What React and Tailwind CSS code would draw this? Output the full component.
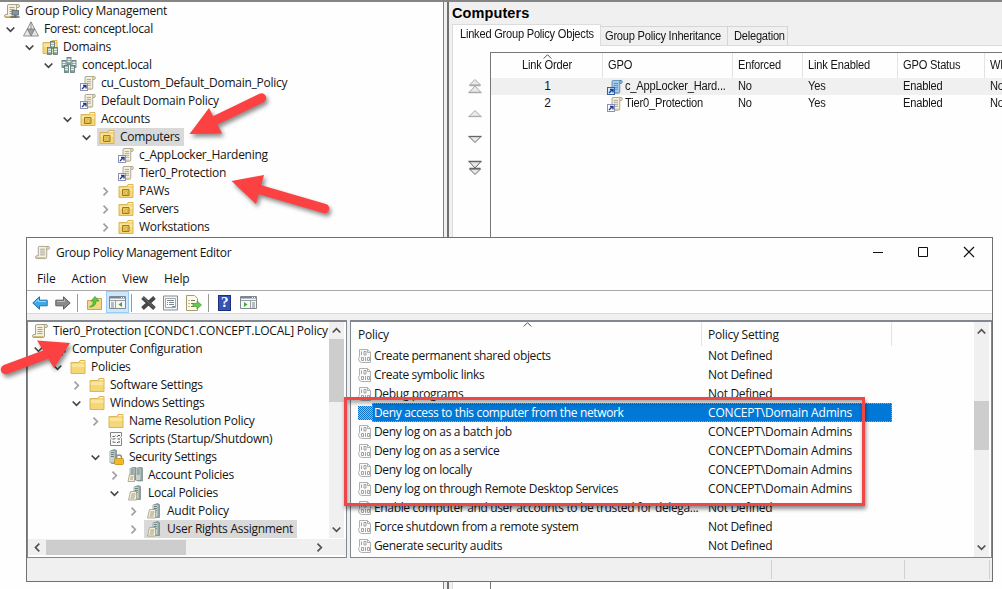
const CONSOLE_TREE = [
  { level: 0, icon: "console", label: "Group Policy Management" },
  { level: 1, icon: "forest", label: "Forest: concept.local", open: true },
  { level: 2, icon: "domains", label: "Domains", open: true },
  { level: 3, icon: "domain", label: "concept.local", open: true },
  { level: 4, icon: "link", label: "cu_Custom_Default_Domain_Policy" },
  { level: 4, icon: "link", label: "Default Domain Policy" },
  { level: 4, icon: "ou", label: "Accounts", open: true },
  { level: 5, icon: "ou", label: "Computers", open: true, selected: true },
  { level: 6, icon: "link", label: "c_AppLocker_Hardening" },
  { level: 6, icon: "link", label: "Tier0_Protection" },
  { level: 6, icon: "ou", label: "PAWs", open: false },
  { level: 6, icon: "ou", label: "Servers", open: false },
  { level: 6, icon: "ou", label: "Workstations", open: false },
];

const EDITOR_TREE = [
  { level: 0, icon: "scroll", label: "Tier0_Protection [CONDC1.CONCEPT.LOCAL] Policy", wide: true },
  { level: 1, icon: "computer", label: "Computer Configuration", open: true },
  { level: 2, icon: "folder", label: "Policies", open: true },
  { level: 3, icon: "folder", label: "Software Settings", open: false },
  { level: 3, icon: "folder", label: "Windows Settings", open: true },
  { level: 4, icon: "folder", label: "Name Resolution Policy", open: false },
  { level: 4, icon: "script", label: "Scripts (Startup/Shutdown)" },
  { level: 4, icon: "security", label: "Security Settings", open: true },
  { level: 5, icon: "servers", label: "Account Policies", open: false },
  { level: 5, icon: "server", label: "Local Policies", open: true },
  { level: 6, icon: "server", label: "Audit Policy", open: false },
  { level: 6, icon: "server", label: "User Rights Assignment", open: false, selected: true },
];

const POLICIES = [
  ["Create permanent shared objects", "Not Defined"],
  ["Create symbolic links", "Not Defined"],
  ["Debug programs", "Not Defined"],
  ["Deny access to this computer from the network", "CONCEPT\\Domain Admins"],
  ["Deny log on as a batch job", "CONCEPT\\Domain Admins"],
  ["Deny log on as a service", "CONCEPT\\Domain Admins"],
  ["Deny log on locally", "CONCEPT\\Domain Admins"],
  ["Deny log on through Remote Desktop Services", "CONCEPT\\Domain Admins"],
  ["Enable computer and user accounts to be trusted for delega...", "Not Defined"],
  ["Force shutdown from a remote system", "Not Defined"],
  ["Generate security audits", "Not Defined"],
];

const LINKS = [
  { order: 1, name: "c_AppLocker_Hard...", active: true },
  { order: 2, name: "Tier0_Protection" },
];

function Scroll({ blue }) {
  const paper = blue ? "#a9cdea" : "#f4f0dc";
  const line = blue ? "#3f78a8" : "#8f8b78";
  return (
    <>
      <path d="M4.5 1.5h9.5q1.5 0 1.5 1.5t-1.5 1.5h-1.5V13q0 1.5-1.5 1.5H2q-1.5 0-1.5-1.5t1.5-1.5h1.5V3q0-1.5 1-1.5z" fill={paper} stroke={line} strokeWidth=".8" />
      <path d="M12.5 4.500V3q0-1.500 1.500-1.500" fill="none" stroke={blue ? line : "#b9a65e"} />
      <path d="M5.500 4.500h5M5.500 6.500h5M5.500 8.500h5M5.500 10.500h5" stroke={blue ? "#4c86b5" : "#9b9b96"} strokeWidth=".9" />
      <path d="M1 13.500h10" stroke={blue ? "#6fa3cf" : "#d3bd78"} />
    </>
  );
}

function Folder() {
  return (
    <>
      <path d="M1 3.500h8l1-2h5v13H1z" fill="#f6d778" stroke="#d6b04d" strokeWidth=".9" />
      <path d="M10.500 2.500h4" stroke="#fff3c0" />
      <path d="M1.800 5h12.500v3H1.800z" fill="#fbe59b" />
    </>
  );
}

function Tower({ x, y, h }) {
  return (
    <g transform={`translate(${x} ${y})`}>
      <path d={`M0 1.500 4.500 0 6.500 1v${h}L2 ${h + 1} 0 ${h}z`} fill="#8fa3a3" stroke="#6a7b7b" strokeWidth=".6" />
      <path d={`M0 1.500h4.500v${h - 1.5}H0z`} fill="#c5d2d0" />
      <path d="M.8 3h3M.8 5h3M.8 7h3" stroke="#4e6767" strokeWidth=".8" />
    </g>
  );
}

function ComputerBox({ x, y }) {
  return (
    <g transform={`translate(${x} ${y})`}>
      <rect x=".5" y=".5" width="4" height="7" fill="#9bb4b2" stroke="#5f7678" strokeWidth=".8" />
      <path d="M1 2.500h3M1 4.500h3" stroke="#e4f1ef" />
      <rect x="1" y="6" width="2.500" height="1.200" fill="#5eb649" />
    </g>
  );
}

const GLYPHS = {
  console: (
    <>
      <Scroll />
      <rect x="8" y="7.500" width="6.500" height="4.500" fill="#8596a2" stroke="#5f6a70" strokeWidth=".8" />
      <path d="M6.500 14h9M11 12v2" stroke="#666" strokeWidth="1.600" />
    </>
  ),
  forest: (
    <>
      <path d="M8 .8 15.500 15H.5z" fill="#e6e8e7" stroke="#858988" strokeWidth=".9" />
      <path d="M4.300 8h7.400L8 15z" fill="#9da2a1" stroke="#747877" strokeWidth=".8" />
      <path d="M8 1v7" stroke="#747877" strokeWidth=".8" />
    </>
  ),
  domains: (
    <>
      <Folder />
      <ComputerBox x={8} y={2} />
      <ComputerBox x={5} y={8} />
      <ComputerBox x={11} y={8} />
    </>
  ),
  domain: (
    <>
      <ComputerBox x={5.5} y={0} />
      <ComputerBox x={0.5} y={3} />
      <ComputerBox x={10.5} y={3} />
      <ComputerBox x={3} y={8} />
      <ComputerBox x={9} y={8} />
    </>
  ),
  link: (
    <>
      <g transform="translate(2 0) scale(.86 .98)"><Scroll /></g>
      <rect x=".5" y="8.500" width="7" height="7" fill="#fff" stroke="#8b91b5" />
      <path d="M2 14l3-3M3 10.500h3v3" fill="none" stroke="#283a8e" strokeWidth="1.400" />
    </>
  ),
  linkBlue: (
    <>
      <g transform="translate(2 0) scale(.86 .98)"><Scroll blue /></g>
      <rect x=".5" y="8.500" width="7" height="7" fill="#d7e8f8" stroke="#315fa5" />
      <path d="M2 14l3-3M3 10.500h3v3" fill="none" stroke="#123d93" strokeWidth="1.400" />
    </>
  ),
  ou: (
    <>
      <Folder />
      <path d="M4.500 6.500h6.500v6H4.500z" fill="#e8c450" stroke="#9b7a1f" />
      <path d="M7 9h2.500v2H7z" fill="#fff0a8" stroke="#b8902c" strokeWidth=".6" />
    </>
  ),
  folder: <Folder />,
  scroll: <Scroll />,
  computer: (
    <>
      <rect x="2" y="3" width="12" height="8" fill="#7893a6" stroke="#555" />
      <path d="M5 13.500h7" stroke="#555" strokeWidth="2" />
    </>
  ),
  script: (
    <>
      <path d="M2.500 1.500h11v4l-1 1 1 1v7h-11v-6l1-1-1-1z" fill="#fafafa" stroke="#858585" />
      <path d="M4.500 5.500h2l1-1M12 4.500h-2l-1 1.500M4.500 8h2l1-1M12 8h-2.500M4.500 11h2l1 1M12 11h-2l-1 1" stroke="#555" fill="none" />
    </>
  ),
  security: (
    <>
      <Tower x={2} y={0.5} h={13} />
      <path d="M8.500 10V8.500a2.500 2.500 0 0 1 5 0V10" fill="none" stroke="#908e86" strokeWidth="1.400" />
      <rect x="6.500" y="9.500" width="9" height="6" rx="1" fill="#f0b92b" stroke="#c08b13" strokeWidth=".8" />
    </>
  ),
  servers: (
    <>
      <Tower x={3} y={0} h={12} />
      <Tower x={9} y={0} h={13} />
      <path d="M2.500 7.500h5v7H1z" fill="#f6f0d4" stroke="#a59c75" strokeWidth=".8" />
      <path d="M3.500 10h3M3 12h3" stroke="#999" />
    </>
  ),
  server: (
    <>
      <Tower x={7} y={0.5} h={13} />
      <path d="M3.500 6.500h6v8.500H1.500z" fill="#f6f0d4" stroke="#a59c75" strokeWidth=".8" />
      <path d="M4.500 9h4M4 11h4M3.500 13h4" stroke="#999" />
    </>
  ),
};

function Glyph({ name, className = "h-[16px] w-[16px]" }) {
  return (
    <svg className={`shrink-0 ${className}`} viewBox="0 0 16 16">
      {GLYPHS[name]}
    </svg>
  );
}

function Chevron({ dir, className = "h-[9px] w-[9px]", color = "#505050", width = 1.7 }) {
  const paths = {
    down: "M.7 2.500l3.800 3.800L8.300 2.500",
    up: "M.7 6.500L4.500 2.700 8.300 6.500",
    right: "M2.500.7l3.800 3.800L2.500 8.300",
    left: "M6.300.7L2.500 4.500 6.300 8.300",
  };
  return (
    <svg className={`shrink-0 ${className}`} viewBox="0 0 9 9" fill="none">
      <path d={paths[dir]} stroke={color} strokeWidth={width} />
    </svg>
  );
}

function Tree({ rows }) {
  return (
    <div>
      {rows.map((row) => (
        <div key={row.label} className="flex h-[18px] items-center" style={{ paddingLeft: row.level * 19 }}>
          <span className="flex w-[15px] shrink-0">
            {row.open !== undefined && (
              <Chevron dir={row.open ? "down" : "right"} color={row.open ? "#444" : "#a0a0a0"} />
            )}
          </span>
          <span className={`flex h-[18px] items-center gap-[4px] pr-[4px] pl-0.5 ${row.selected ? "bg-[#d9d9d9]" : ""}`}>
            <Glyph name={row.icon} />
            <span className={`pl-px leading-[18px] whitespace-nowrap ${row.wide ? "tracking-[-0.2px]" : "tracking-[-0.27px]"}`}>
              {row.label}
            </span>
          </span>
        </div>
      ))}
    </div>
  );
}

function OrderArrow({ double, down }) {
  const stroke = down ? "#666" : "#aaa";
  return (
    <svg className={`h-4 w-4 ${down ? "rotate-180" : ""}`} viewBox="0 0 16 16" fill="#e9e9e9" stroke={stroke}>
      {double ? (
        <>
          <path d="M8 1.500l5.500 5.500h-11z" />
          <path d="M8 8l6 6.500H2z" />
          <path d="M1.500 14.500h13M2.500 7.500h11" strokeWidth="1.300" />
        </>
      ) : (
        <>
          <path d="M8 5.500l6 6H2z" />
          <path d="M1.500 11.500h13" strokeWidth="1.300" />
        </>
      )}
    </svg>
  );
}

// Slightly condensed grotesque used by the classic dialog controls
function Narrow({ children, center }) {
  return (
    <span className={`inline-block scale-x-[0.925] whitespace-nowrap ${center ? "origin-center" : "origin-left"}`}>
      {children}
    </span>
  );
}

function ConsoleWindow() {
  return (
    <div className="flex h-full border-t-2 border-[#858585] bg-[#f0f0f0]">
      <section className="w-[444px] shrink-0 border-r border-[#808080] bg-[#fefefe] pl-[7px]">
        <div className="-ml-[20px]">
          <Tree rows={CONSOLE_TREE} />
        </div>
      </section>
      <section className="ml-[3px] flex min-w-0 flex-1 flex-col border-l-2 border-[#707070] pl-[3px]">
        <h1 className="h-[22px] font-['Liberation_Sans',sans-serif] text-[14.5px] leading-[22px] font-bold tracking-[0.1px] text-black">Computers</h1>
        <div className="flex h-[21px] items-end font-['Liberation_Sans',sans-serif] text-[12px] tracking-[-0.25px]">
          <div className="z-10 -mb-px h-[22px] w-[149px] border-x border-t border-[#dcdcdc] bg-[#fefefe] pl-[7px] leading-[19px]">
            <Narrow>Linked Group Policy Objects</Narrow>
          </div>
          <div className="h-[19px] w-[127px] border-t border-r border-[#d5d5d5] pl-1 leading-[19px]">
            <Narrow>Group Policy Inheritance</Narrow>
          </div>
          <div className="h-[19px] w-[60px] border-t border-r border-[#d5d5d5] pl-[6px] leading-[19px]">
            <Narrow>Delegation</Narrow>
          </div>
        </div>
        <div className="flex min-h-0 flex-1 border-t border-l border-[#dcdcdc] bg-[#fefefe] pt-[6px]">
          <div className="flex w-[37px] shrink-0 flex-col items-center gap-[11.5px] pt-[26px] pl-[6px]">
            <OrderArrow double />
            <div className="-mt-px"><OrderArrow /></div>
            <OrderArrow down />
            <OrderArrow double down />
          </div>
          <LinkedObjects />
        </div>
      </section>
    </div>
  );
}

function LinkedObjects() {
  const cols = "grid grid-cols-[112px_130px_70px_95px_87px_60px]";
  const head = "border-r border-[#e3e3e3] pl-[5px] leading-[25px]";
  return (
    <div className="min-w-0 flex-1 overflow-hidden border-t border-l border-[#777] font-['Liberation_Sans',sans-serif] text-[12px] tracking-[-0.2px]">
      <div className={`${cols} h-[25px]`}>
        <div className="relative border-r border-[#e3e3e3] pl-px text-center leading-[25px]">
          <Chevron dir="up" className="absolute -top-px left-[52px] h-[9px] w-[9px]" width={1} />
          <Narrow center>Link Order</Narrow>
        </div>
        <div className={head}><Narrow>GPO</Narrow></div>
        <div className={head}><Narrow>Enforced</Narrow></div>
        <div className={head}><Narrow>Link Enabled</Narrow></div>
        <div className={head}><Narrow>GPO Status</Narrow></div>
        <div className="pl-[5px] leading-[25px]"><Narrow>WMI Filter</Narrow></div>
      </div>
      {LINKS.map((link) => (
        <div key={link.order} className={`${cols} h-[17px] leading-[17px] ${link.active ? "bg-[#f0f0f0]" : ""}`}>
          <div className="pl-px text-center">{link.order}</div>
          <div className="flex items-center gap-[2px] pl-[4px]">
            <Glyph name={link.active ? "linkBlue" : "link"} />
            <Narrow>{link.name}</Narrow>
          </div>
          <div className="pl-[5px]"><Narrow>No</Narrow></div>
          <div className="pl-[5px]"><Narrow>Yes</Narrow></div>
          <div className="pl-[5px]"><Narrow>Enabled</Narrow></div>
          <div className="pl-[5px]"><Narrow>None</Narrow></div>
        </div>
      ))}
    </div>
  );
}

function PanelIcon({ right }) {
  return (
    <svg className="h-[15px] w-[17px]" viewBox="0 0 17 15" fill="none">
      <path d="M.5 1.500h16v12H.5z" fill="#f6f6f6" stroke="#808991" />
      <path d="M1 2.500h15" stroke="#778591" strokeWidth="2" />
      <path d="M12 2.500h1M14 2.500h1" stroke="#fff" />
      <path d="M1 5.500h15" stroke="#9a9fa4" />
      {right ? (
        <>
          <path d="M10.500 6v7" stroke="#9a9fa4" />
          <path d="M4 7v5l3.500-2.500z" fill="#44a839" />
          <path d="M12 8h3M12 10h3M12 12h3" stroke="#778591" />
        </>
      ) : (
        <>
          <path d="M2 8h3M2 10h3M2 12h3" stroke="#778591" />
          <path d="M6.500 6v7" stroke="#9a9fa4" />
          <path d="M13 7v5L9.500 9.500z" fill="#44a839" />
        </>
      )}
    </svg>
  );
}

function Toolbar() {
  return (
    <div className="flex h-[23px] items-center border-b border-[#dadada] pt-px pl-[5px]">
      <svg className="h-4 w-4" viewBox="0 0 16 16">
        <path d="M.8 8 7.500 1.800v3.400h7.700v5.600H7.500v3.400z" fill="#3fa9e8" stroke="#2472ae" />
        <path d="M3 7.500 6.500 4.500v2h7.500" fill="none" stroke="#98dcff" />
      </svg>
      <svg className="ml-[7px] h-4 w-4" viewBox="0 0 16 16">
        <path d="M15.200 8 8.500 1.800v3.400H.8v5.600h7.700v3.400z" fill="#8b8b8b" stroke="#5e5e5e" />
        <path d="M2 6.500h7.500v-2" fill="none" stroke="#bbb" />
      </svg>
      <i className="ml-[6px] h-[18px] w-px bg-[#999]" />
      <svg className="ml-[9px] h-4 w-[15px]" viewBox="0 0 15 16">
        <path d="M.5 5.500h6l1-2h7v11H.5z" fill="#f5d783" stroke="#c9a550" />
        <path d="M2.500 12q4-1 4-6H4L8 1.500 12 6H9q0 6-6.500 6z" fill="#5cc944" stroke="#2f9a2c" strokeWidth=".7" />
      </svg>
      <span className="-mt-px ml-[4px] flex h-[22px] w-[23px] items-center justify-center border border-[#99ccf3] bg-[#cce6fb] pt-px">
        <PanelIcon />
      </span>
      <i className="ml-[2px] h-[18px] w-px bg-[#999]" />
      <svg className="ml-[8px] h-4 w-[17px]" viewBox="0 0 17 16">
        <path d="M2.500 2.500l12 11M14.500 2.500l-12 11" stroke="#474747" strokeWidth="3.800" />
        <path d="M3 2l11.500 11" stroke="#777" strokeWidth=".8" />
      </svg>
      <svg className="ml-[6px] h-4 w-[15px]" viewBox="0 0 15 16" fill="none">
        <path d="M.5 1h14v14H.5z" fill="#f4f4f4" stroke="#8b8b8b" />
        <path d="M2.500 3.500h10v9h-10z" fill="#fff" stroke="#a0a6aa" />
        <path d="M4 5.500h7M4 7.500h1M6 7.500h5M4 9.500h1M6 9.500h5M9 11.500h3" stroke="#7b8790" />
      </svg>
      <svg className="ml-[8px] h-4 w-4" viewBox="0 0 16 16" fill="none">
        <path d="M.5.5h8l3 3v12H.5z" fill="#fffbe5" stroke="#a99a6c" />
        <path d="M2.500 5.500h1M5 5.500h4M2.500 8.500h1M5 8.500h3M2.500 11.500h1M5 11.500h3" stroke="#777" />
        <path d="M7 8.500h4V6l4.500 4-4.500 4v-2.500H7z" fill="#65cb4d" stroke="#399e2d" strokeWidth=".7" />
      </svg>
      <i className="ml-[6px] h-[18px] w-px bg-[#999]" />
      <span className="ml-[9px] flex h-4 w-[13px] items-center justify-center border border-[#1f2f80] bg-[#3454b4] font-['Liberation_Serif',serif] text-[15px] leading-none font-bold text-white">?</span>
      <span className="ml-[9px]"><PanelIcon right /></span>
    </div>
  );
}

function PolicyIcon({ selected }) {
  return (
    <svg className="h-[14px] w-[14px] shrink-0" viewBox="0 0 14 14" fill="none">
      <path d="M1.500.5h8l3 3v10h-9l-2-1-1-3 1-2z" fill="#f9f9f9" stroke="#b0b0b0" />
      <path d="M9.500.5v3h3" stroke="#b0b0b0" />
      <path d="M3.500 2.500v3.500M3.500 8.500h2v3h-2zM7.500 8v4M6 2.500h2V6H6zM9.500 8.500h2v3h-2z" stroke="#999" strokeWidth=".9" />
      {selected && (
        <>
          <rect width="14" height="14" fill="#8cc0ec" />
          {[0, 1, 2, 3, 4, 5, 6, 7, 8, 9, 10, 11, 12, 13].map((y) => (
            <path key={y} d={`M0 ${y + 0.5}h14`} stroke="#0e73c8" strokeDasharray="1 1" strokeDashoffset={y % 2} />
          ))}
        </>
      )}
    </svg>
  );
}

function PolicyList() {
  return (
    <section className="flex min-w-0 flex-1 border border-t-2 border-[#828790] bg-[#fefefe]">
      <div className="min-w-0 flex-1 overflow-hidden">
        <div className="flex h-[24px]">
          <div className="relative w-[351px] border-r border-[#e3e3e3] pl-[7px] leading-[25px]">
            Policy
            <Chevron dir="up" className="absolute -top-[2px] left-[172px] h-[9px] w-[9px]" width={1} />
          </div>
          <div className="w-[190px] border-r border-[#e3e3e3] pl-[6px] leading-[25px]">Policy Setting</div>
        </div>
        {POLICIES.map(([name, setting], i) => (
          <div key={name} className="flex h-[19px] items-center pl-[7px]">
            <PolicyIcon selected={i === 3} />
            <div
              className={`flex h-[19px] w-[520px] items-center border border-dotted pl-px whitespace-nowrap ${
                i === 3 ? "border-[#e09a50] bg-[#0078d7] text-white" : "border-transparent"
              }`}
            >
              <span className="w-[334px] shrink-0 tracking-[-0.35px]">{name}</span>
              <span className={setting === "Not Defined" ? "tracking-[-0.3px]" : "tracking-[-0.17px]"}>{setting}</span>
            </div>
          </div>
        ))}
      </div>
      <div className="mr-0.5 flex w-[15px] flex-col items-center bg-[#f0f0f0] py-[5px]">
        <Chevron dir="up" />
        <div className="mt-[65px] h-[49px] w-[15px] bg-[#cdcdcd]" />
        <div className="flex-1" />
        <Chevron dir="down" />
      </div>
    </section>
  );
}

function EditorWindow() {
  return (
    <div className="absolute top-[237px] left-[26px] flex h-[345px] w-[967px] flex-col border border-[#707070] bg-[#f0f0f0]">
      <div className="bg-[#fefefe]">
        <div className="flex h-[29px] items-center pl-2">
          <Glyph name="scroll" className="h-[15px] w-[15px]" />
          <span className="ml-[6px] flex-1 tracking-[-0.32px]">Group Policy Management Editor</span>
          <svg className="-mt-px mr-[16px] h-3 w-[104px]" viewBox="0 0 104 12" fill="none" stroke="#111">
            <path d="M1 6.500h10" />
            <path d="M46.500 1.500h9v9h-9z" />
            <path d="M92 1l10 10M102 1L92 11" strokeWidth="1.200" />
          </svg>
        </div>
        <div className="flex h-[24px] items-center gap-[16px] border-b border-[#a9a9a9] pl-[10px] tracking-[-0.1px]">
          <span>File</span>
          <span>Action</span>
          <span>View</span>
          <span>Help</span>
        </div>
        <Toolbar />
      </div>
      <div className="mt-[6px] flex h-[238px] gap-[3px]">
        <section className="flex w-[320px] flex-col border border-t-2 border-[#828790] bg-[#fefefe]">
          <div className="flex">
            <div className="h-[216px] w-[301px] overflow-hidden pl-[7px]">
              {/* the root row has no expander, so its column is pulled under the border */}
              <div className="-ml-[20px]">
                <Tree rows={EDITOR_TREE} />
              </div>
            </div>
            <div className="flex w-[15px] flex-col items-center bg-[#f0f0f0] py-[4px]">
              <Chevron dir="up" />
              <div className="mt-[4px] h-[63px] w-[15px] bg-[#cdcdcd]" />
              <div className="flex-1" />
              <Chevron dir="down" />
            </div>
          </div>
          <div className="mt-px flex h-[16px] items-center bg-[#f0f0f0] pl-[5px]">
            <Chevron dir="left" />
            <div className="ml-[4px] h-[15px] w-[140px] bg-[#cdcdcd]" />
            <Chevron dir="right" className="ml-[129px] h-[9px] w-[9px]" />
          </div>
        </section>
        <PolicyList />
      </div>
      <div className="flex flex-1 py-0.5">
        <i className="w-[745px] border-r border-[#d0d0d0]" />
        <i className="w-[133px] border-r border-[#d0d0d0]" />
        <i className="w-[85px] border-r border-[#d0d0d0]" />
      </div>
    </div>
  );
}

function Annotations() {
  return (
    <>
      <div className="absolute top-[397px] left-[344px] h-[109px] w-[521px] border-[3px] border-[#ef4648] shadow-[1px_3px_4px_rgba(0,0,0,0.45),inset_1px_3px_4px_rgba(0,0,0,0.35)]" />
      <svg className="absolute top-0 left-0 h-[589px] w-[1002px] drop-shadow-[2px_3px_2px_rgba(0,0,0,0.45)]" viewBox="0 0 1002 589" fill="#fb4142" stroke="#fb4142" strokeLinecap="round">
        <path stroke="none" d="M189.500 134 209 108 222 133.500z" />
        <path strokeWidth="9.500" d="M216 120 261.500 98" />
        <path stroke="none" d="M231.500 181 264 175 256 204z" />
        <path strokeWidth="9.500" d="M261 190 324.500 208.500" />
        <path stroke="none" d="M70 343 37 340.500 54 368z" />
        <path strokeWidth="9.500" d="M46 354.500 5.500 369.500" />
      </svg>
    </>
  );
}

export default function App() {
  return (
    <div className="relative h-[589px] w-[1002px] overflow-hidden bg-white font-['Open_Sans','Noto_Sans',sans-serif] text-[12px] tracking-[-0.25px] text-[#151515]">
      <ConsoleWindow />
      <EditorWindow />
      <Annotations />
    </div>
  );
}
